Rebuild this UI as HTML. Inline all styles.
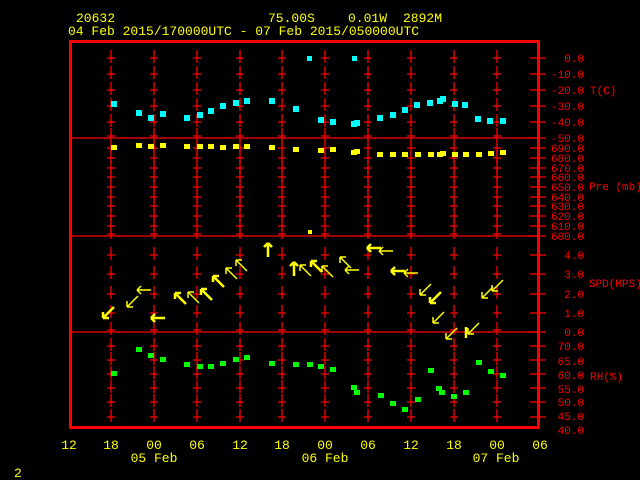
<!DOCTYPE html>
<html><head><meta charset="utf-8"><style>
html,body{margin:0;padding:0;background:#000;width:640px;height:480px;overflow:hidden}
svg{display:block}
text{font-family:"Liberation Mono",monospace}
</style></head><body>
<svg width="640" height="480" viewBox="0 0 640 480" xmlns="http://www.w3.org/2000/svg">
<defs>
<g id="c"><path d="M0,-8V5M-4,0H4" stroke="#f00" stroke-width="1.3" fill="none"/></g>
<path id="ul" d="M6,6L-5,-5M-5,-5L1,-5M-5,-5L-5,1" fill="none"/>
<path id="dl" d="M6,-6L-5,5M-5,5L1,5M-5,5L-5,-1" fill="none"/>
<path id="l" d="M8,0L-6,0M-6,0L-2,-4M-6,0L-2,4" fill="none"/>
<path id="u" d="M0,8L0,-6M0,-6L-4,-2M0,-6L4,-2" fill="none"/>
<g id="col">
<use href="#c" x="0" y="58"/><use href="#c" x="0" y="74"/><use href="#c" x="0" y="90"/><use href="#c" x="0" y="106"/><use href="#c" x="0" y="122"/><use href="#c" x="0" y="136"/>
<use href="#c" x="0" y="148"/><use href="#c" x="0" y="158"/><use href="#c" x="0" y="168"/><use href="#c" x="0" y="177"/><use href="#c" x="0" y="187"/><use href="#c" x="0" y="197"/><use href="#c" x="0" y="206"/><use href="#c" x="0" y="216"/><use href="#c" x="0" y="226"/><use href="#c" x="0" y="234"/>
<use href="#c" x="0" y="255"/><use href="#c" x="0" y="274"/><use href="#c" x="0" y="294"/><use href="#c" x="0" y="313"/><use href="#c" x="0" y="330"/>
<use href="#c" x="0" y="346"/><use href="#c" x="0" y="360"/><use href="#c" x="0" y="374"/><use href="#c" x="0" y="388"/><use href="#c" x="0" y="402"/><use href="#c" x="0" y="417"/>
</g>
</defs>
<g fill="#ff0" font-size="13">
<text x="76" y="22">20632</text>
<text x="268" y="22">75.00S</text>
<text x="348" y="22">0.01W</text>
<text x="403" y="22">2892M</text>
<text x="68" y="35">04 Feb 2015/170000UTC - 07 Feb 2015/050000UTC</text>
<text x="14" y="477">2</text>
</g>
<rect x="70.5" y="41.5" width="468" height="386" fill="none" stroke="#f00" stroke-width="3"/>
<g stroke="#f00" stroke-width="1.2">
<line x1="70" y1="138" x2="540" y2="138"/>
<line x1="70" y1="236" x2="540" y2="236"/>
<line x1="70" y1="332" x2="540" y2="332"/>
</g>
<use href="#col" x="111"/><use href="#col" x="154"/><use href="#col" x="197"/><use href="#col" x="240"/><use href="#col" x="282"/><use href="#col" x="325"/><use href="#col" x="368"/><use href="#col" x="411"/><use href="#col" x="454"/><use href="#col" x="497"/>
<g stroke="#f00" stroke-width="1.2">
<path d="M530,58H546M530,74H546M530,90H546M530,106H546M530,122H546M530,138H546M530,148H546M530,158H546M530,168H546M530,177H546M530,187H546M530,197H546M530,206H546M530,216H546M530,226H546M530,236H546M530,255H546M530,274H546M530,294H546M530,313H546M530,332H546M530,346H546M530,360H546M530,374H546M530,388H546M530,402H546M530,417H546"/>
</g>
<g fill="#f00" font-size="11" text-anchor="end">
<text x="584" y="62">0.0</text><text x="584" y="78">-10.0</text><text x="584" y="94">-20.0</text><text x="584" y="110">-30.0</text><text x="584" y="126">-40.0</text><text x="584" y="142">-50.0</text>
<text x="584" y="152">690.0</text><text x="584" y="162">680.0</text><text x="584" y="172">670.0</text><text x="584" y="181">660.0</text><text x="584" y="191">650.0</text><text x="584" y="201">640.0</text><text x="584" y="210">630.0</text><text x="584" y="220">620.0</text><text x="584" y="230">610.0</text><text x="584" y="240">600.0</text>
<text x="584" y="259">4.0</text><text x="584" y="278">3.0</text><text x="584" y="298">2.0</text><text x="584" y="317">1.0</text><text x="584" y="336">0.0</text>
<text x="584" y="350">70.0</text><text x="584" y="365">65.0</text><text x="584" y="379">60.0</text><text x="584" y="393">55.0</text><text x="584" y="406">50.0</text><text x="584" y="420">45.0</text><text x="584" y="434">40.0</text>
</g>
<g fill="#f00" font-size="11">
<text x="590" y="94">T(C)</text><text x="589" y="190">Pre (mb)</text><text x="589" y="287">SPD(MPS)</text><text x="590" y="380">RH(%)</text>
</g>
<g fill="#ff0" font-size="13" text-anchor="middle">
<text x="69" y="449">12</text><text x="111" y="449">18</text><text x="154" y="449">00</text><text x="197" y="449">06</text><text x="240" y="449">12</text><text x="282" y="449">18</text><text x="325" y="449">00</text><text x="368" y="449">06</text><text x="411" y="449">12</text><text x="454" y="449">18</text><text x="497" y="449">00</text><text x="540" y="449">06</text>
<text x="154" y="462">05 Feb</text><text x="325" y="462">06 Feb</text><text x="496" y="462">07 Feb</text>
</g>
<g fill="#0ff">
<rect x="111" y="101" width="6" height="6"/><rect x="136" y="110" width="6" height="6"/><rect x="148" y="115" width="6" height="6"/><rect x="160" y="111" width="6" height="6"/><rect x="184" y="115" width="6" height="6"/><rect x="197" y="112" width="6" height="6"/><rect x="208" y="108" width="6" height="6"/><rect x="220" y="103" width="6" height="6"/><rect x="233" y="100" width="6" height="6"/><rect x="244" y="98" width="6" height="6"/><rect x="269" y="98" width="6" height="6"/><rect x="293" y="106" width="6" height="6"/><rect x="318" y="117" width="6" height="6"/><rect x="330" y="119" width="6" height="6"/><rect x="351" y="121" width="6" height="6"/><rect x="354" y="120" width="6" height="6"/><rect x="377" y="115" width="6" height="6"/><rect x="390" y="112" width="6" height="6"/><rect x="402" y="107" width="6" height="6"/><rect x="414" y="102" width="6" height="6"/><rect x="427" y="100" width="6" height="6"/><rect x="437" y="98" width="6" height="6"/><rect x="440" y="96" width="6" height="6"/><rect x="452" y="101" width="6" height="6"/><rect x="462" y="102" width="6" height="6"/><rect x="475" y="116" width="6" height="6"/><rect x="487" y="118" width="6" height="6"/><rect x="500" y="118" width="6" height="6"/>
<rect x="307" y="56" width="5" height="5"/><rect x="352" y="56" width="5" height="5"/>
</g>
<g fill="#ff0">
<rect x="111" y="145" width="6" height="5"/><rect x="136" y="143" width="6" height="5"/><rect x="148" y="144" width="6" height="5"/><rect x="160" y="143" width="6" height="5"/><rect x="184" y="144" width="6" height="5"/><rect x="197" y="144" width="6" height="5"/><rect x="208" y="144" width="6" height="5"/><rect x="220" y="145" width="6" height="5"/><rect x="233" y="144" width="6" height="5"/><rect x="244" y="144" width="6" height="5"/><rect x="269" y="145" width="6" height="5"/><rect x="293" y="147" width="6" height="5"/><rect x="318" y="148" width="6" height="5"/><rect x="330" y="147" width="6" height="5"/><rect x="351" y="150" width="6" height="5"/><rect x="354" y="149" width="6" height="5"/><rect x="377" y="152" width="6" height="5"/><rect x="390" y="152" width="6" height="5"/><rect x="402" y="152" width="6" height="5"/><rect x="415" y="152" width="6" height="5"/><rect x="428" y="152" width="6" height="5"/><rect x="437" y="152" width="6" height="5"/><rect x="440" y="151" width="6" height="5"/><rect x="452" y="152" width="6" height="5"/><rect x="463" y="152" width="6" height="5"/><rect x="476" y="152" width="6" height="5"/><rect x="488" y="151" width="6" height="5"/><rect x="500" y="150" width="6" height="5"/>
<rect x="308" y="230" width="4" height="4"/>
</g>
<g stroke="#ff0" stroke-width="1.5">
<use href="#dl" x="108" y="313" stroke-width="2.5"/><use href="#dl" x="132" y="302"/><use href="#l" x="143" y="290"/><use href="#l" x="157" y="318" stroke-width="2.5"/>
<use href="#ul" x="180" y="298" stroke-width="2.5"/><use href="#ul" x="193" y="297"/><use href="#ul" x="206" y="294" stroke-width="2.5"/><use href="#ul" x="218" y="281" stroke-width="2.5"/><use href="#ul" x="231" y="273"/><use href="#ul" x="241" y="265"/>
<use href="#u" x="268" y="249" stroke-width="2.5"/><use href="#u" x="294" y="268" stroke-width="2.5"/><use href="#ul" x="305" y="270"/><use href="#ul" x="316" y="266" stroke-width="2.5"/><use href="#ul" x="327" y="271"/><use href="#ul" x="345" y="262"/><use href="#l" x="351" y="270"/>
<use href="#l" x="373" y="248" stroke-width="2.5"/><use href="#l" x="385" y="251"/><use href="#l" x="397" y="271" stroke-width="2.5"/><use href="#l" x="410" y="273"/>
<use href="#dl" x="425" y="290"/><use href="#dl" x="435" y="298" stroke-width="2.5"/><use href="#dl" x="438" y="318"/><use href="#dl" x="451" y="334"/><use href="#dl" x="473" y="329"/><use href="#dl" x="487" y="293"/><use href="#dl" x="497" y="286"/>
<line x1="466" y1="327" x2="466" y2="338" stroke-width="2.5"/>
</g>
<g fill="#0f0">
<rect x="111" y="371" width="6" height="5"/><rect x="136" y="347" width="6" height="5"/><rect x="148" y="353" width="6" height="5"/><rect x="160" y="357" width="6" height="5"/><rect x="184" y="362" width="6" height="5"/><rect x="197" y="364" width="6" height="5"/><rect x="208" y="364" width="6" height="5"/><rect x="220" y="361" width="6" height="5"/><rect x="233" y="357" width="6" height="5"/><rect x="244" y="355" width="6" height="5"/><rect x="269" y="361" width="6" height="5"/><rect x="293" y="362" width="6" height="5"/><rect x="307" y="362" width="6" height="5"/><rect x="318" y="364" width="6" height="5"/><rect x="330" y="367" width="6" height="5"/><rect x="351" y="385" width="6" height="5"/><rect x="354" y="390" width="6" height="5"/><rect x="378" y="393" width="6" height="5"/><rect x="390" y="401" width="6" height="5"/><rect x="402" y="407" width="6" height="5"/><rect x="415" y="397" width="6" height="5"/><rect x="428" y="368" width="6" height="5"/><rect x="436" y="386" width="6" height="5"/><rect x="439" y="390" width="6" height="5"/><rect x="451" y="394" width="6" height="5"/><rect x="463" y="390" width="6" height="5"/><rect x="476" y="360" width="6" height="5"/><rect x="488" y="369" width="6" height="5"/><rect x="500" y="373" width="6" height="5"/>
</g>
</svg>
</body></html>
